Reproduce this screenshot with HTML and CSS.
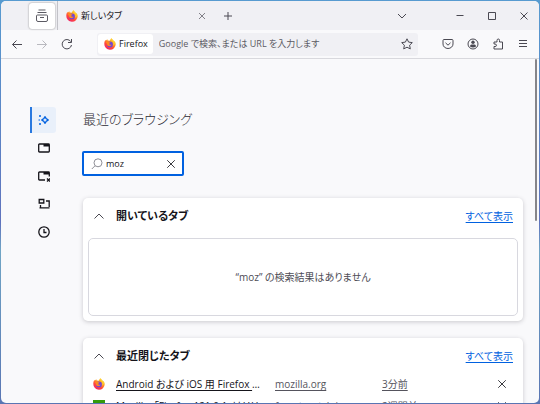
FILE: index.html
```html
<!DOCTYPE html>
<html lang="ja">
<head>
<meta charset="utf-8">
<title>新しいタブ</title>
<link rel="stylesheet" href="styles.css">
</head>
<body>
<svg class="defs" aria-hidden="true">
  <defs>
    <linearGradient id="flame" x1=".85" y1="0" x2=".2" y2="1">
      <stop offset="0" stop-color="#ffe73b"/><stop offset=".35" stop-color="#ffa51f"/><stop offset=".65" stop-color="#ff4a3c"/><stop offset="1" stop-color="#ed1d72"/>
    </linearGradient>
    <symbol id="firefox" viewBox="0 0 16 16">
      <path fill="url(#flame)" d="M15 5.500c-.4-.9-1.100-1.700-1.700-2 .3.600.4 1 .5 1.400C12.700 2.800 11 2.300 10.200.2 8.600 1.100 7.900 2.500 8 3.600 6.600 3.200 5.800 3.300 5.300 3.600 4.600 3 4.600 2.100 4.600 1.700 3.500 2.200 2.800 3 2.400 3.500c-.2-.3-.2-.9-.1-1.300C.9 3.400.4 5.700.4 8a7.600 7.600 0 0 0 15.200.3c0-1-.2-2-.6-2.800z"/>
      <circle cx="8" cy="8.500" r="3.800" fill="#7045d8"/>
      <path fill="#ff8a1e" d="M2.500 5.500c1.500-1.300 3-1.200 4.200.1 1 .1 1.700.1 2 .6-.2.800-1.500.9-1.800 1.500.1 1.400 1.800 1.800 3.200 1-.5 1.600-2 2.500-3.700 2C4.500 10.300 4 9 4 7.500z"/>
      <path fill="#ffd333" d="M10.200.2c-1 1.700.2 3 1.300 4.200 1.600 1.800 1.600 4.400.2 6 2.800-1.700 3.300-3.700 2.100-5.500C12.700 2.800 11 2.300 10.200.2z"/>
    </symbol>
    <symbol id="cross" viewBox="0 0 12 12"><path d="M1.500 1.500l9 9m0-9l-9 9"/></symbol>
    <symbol id="chevron-up" viewBox="0 0 12 12"><path d="M1.500 8.500L6 4l4.500 4.500"/></symbol>
  </defs>
</svg>
<div class="window">
  <div class="tabstrip">
    <button class="view-button" aria-label="Firefox View"><svg class="icon16" viewBox="0 0 16 16"><path d="M4.500 2h7M3.500 4.500h9M3.500 7h9q1 0 1 1v4q0 1.500-1.500 1.500H4q-1.500 0-1.500-1.500V8q0-1 1-1zM6 9.500h4"/></svg></button>
    <div class="tab">
      <svg class="favicon"><use href="#firefox"/></svg>
      <span class="tab-title">新しいタブ</span>
      <button class="tab-close" aria-label="タブを閉じる"><svg class="icon8"><use href="#cross"/></svg></button>
    </div>
    <button class="tool" aria-label="新しいタブを開く"><svg class="icon12" viewBox="0 0 12 12"><path d="M6 2v8M2 6h8"/></svg></button>
    <div class="window-tools">
      <button class="tool" aria-label="タブの一覧"><svg class="icon12" viewBox="0 0 12 12"><path d="M2 4l4 4 4-4"/></svg></button>
      <div class="captions">
        <button class="tool" aria-label="最小化"><svg class="icon12" viewBox="0 0 12 12"><path d="M2.500 5.500h7"/></svg></button>
        <button class="tool" aria-label="最大化"><svg class="icon12" viewBox="0 0 12 12"><path d="M2.500 2.500h7v7h-7z"/></svg></button>
        <button class="tool" aria-label="閉じる"><svg class="icon12" viewBox="0 0 12 12"><path d="M2.500 2.500l7 7m0-7l-7 7"/></svg></button>
      </div>
    </div>
  </div>
  <div class="navbar">
    <div class="history-tools">
      <button class="tool" aria-label="戻る"><svg class="icon12" viewBox="0 0 12 12"><path d="M11 6.500H1.500M5.500 2.500l-4 4 4 4"/></svg></button>
      <button class="tool faded" aria-label="進む"><svg class="icon12" viewBox="0 0 12 12"><path d="M1 6.500h9.500M6.500 2.500l4 4-4 4"/></svg></button>
      <button class="tool" aria-label="再読み込み"><svg class="icon12" viewBox="0 0 12 12"><path d="M10.500 7A4.700 4.700 0 1 1 9.700 3.500M10.500 1v3.500H7"/></svg></button>
    </div>
    <div class="urlbar">
      <span class="identity"><svg class="favicon"><use href="#firefox"/></svg>Firefox</span>
      <input class="url-input" type="text" aria-label="アドレス" placeholder="Google で検索、または URL を入力します">
      <button class="tool" aria-label="ブックマーク"><svg class="icon12" viewBox="0 0 12 12"><path d="M6 .8l1.600 3.300 3.700.5-2.700 2.600.7 3.700L6 9.200l-3.300 1.700.7-3.700L.7 4.600l3.700-.5z"/></svg></button>
    </div>
    <div class="extras">
      <button class="tool" aria-label="Pocket"><svg class="icon12" viewBox="0 0 12 12"><path d="M2 1.500h8q1 0 1 1V6a5 4.500 0 0 1-10 0V2.500q0-1 1-1zM3.500 4.800L6 7.200l2.500-2.400"/></svg></button>
      <button class="tool" aria-label="アカウント"><svg class="icon12" viewBox="0 0 12 12"><circle cx="6" cy="6" r="5"/><circle class="solid" cx="6" cy="4.300" r="1.700"/><path class="solid" d="M3 8.500q0-2 1.500-2h3Q9 6.500 9 8.500 6 10.500 3 8.500z"/></svg></button>
      <button class="tool" aria-label="拡張機能"><svg class="icon12" viewBox="0 0 12 12"><path d="M2 11V8.500h1q1.500 0 1.500-1.200T3 6H2V4h3V2.500Q5 1 6.300 1t1.200 1.500V4H10.500v7z"/></svg></button>
      <button class="tool" aria-label="メニュー"><svg class="icon12" viewBox="0 0 12 12"><path d="M2 2.500h8M2 5.500h8M2 8.500h8"/></svg></button>
    </div>
  </div>
  <div class="page">
    <nav class="sidebar" aria-label="Firefox View">
      <button class="side-item selected" aria-label="最近のブラウジング"><svg class="icon12" viewBox="0 0 12 12"><path class="bold" d="M7 2.500q.7 2.800 3.500 3.500Q7.700 6.700 7 9.500 6.300 6.700 3.500 6 6.300 5.300 7 2.500z"/><path d="M2 1v2M1 2h2M.5 6h1.500M2 9v2M1 10h2"/></svg></button>
      <button class="side-item" aria-label="開いているタブ"><svg class="icon12" viewBox="0 0 12 12"><path class="bold" d="M1.500 2h9q.8 0 .8.800v6.400q0 .8-.8.800h-9q-.8 0-.8-.8V2.800Q.7 2 1.500 2z"/><path class="solid" d="M5.500 2H11v2.500H5.500z"/></svg></button>
      <button class="side-item" aria-label="最近閉じたタブ"><svg class="icon12" viewBox="0 0 12 12"><path class="bold" d="M7 10H1.500q-.8 0-.8-.8V2.800q0-.8.800-.8h9q.8 0 .8.800V6.500M9 8.500l3 3m0-3l-3 3"/><path class="solid" d="M5.500 2H11v2.500H5.500z"/></svg></button>
      <button class="side-item" aria-label="他の端末のタブ"><svg class="icon12" viewBox="0 0 12 12"><path class="bold" d="M1.200 1.500h4.600v3.500H1.200zM8 3h3.200v6M2.500 7v2.500M1.500 9.800h10"/></svg></button>
      <button class="side-item" aria-label="履歴"><svg class="icon12" viewBox="0 0 12 12"><circle class="bold" cx="6" cy="6" r="5.200"/><path class="bold" d="M6 3v3.500h2.500"/></svg></button>
    </nav>
    <main class="content">
      <h1 class="heading">最近のブラウジング</h1>
      <div class="search">
        <svg class="icon12 lens" viewBox="0 0 12 12"><circle cx="7" cy="4.800" r="4"/><path d="M4 7.800L.8 11"/></svg>
        <input class="search-input" type="text" aria-label="検索" value="moz">
        <button class="tool" aria-label="検索をクリア"><svg class="icon10"><use href="#cross"/></svg></button>
      </div>
      <section class="card">
        <div class="card-head">
          <button class="tool" aria-label="折りたたむ"><svg class="icon12"><use href="#chevron-up"/></svg></button>
          <h2 class="card-title">開いているタブ</h2>
          <a class="show-all" href="#">すべて表示</a>
        </div>
        <div class="empty">“moz” の検索結果はありません</div>
      </section>
      <section class="card">
        <div class="card-head">
          <button class="tool" aria-label="折りたたむ"><svg class="icon12"><use href="#chevron-up"/></svg></button>
          <h2 class="card-title">最近閉じたタブ</h2>
          <a class="show-all" href="#">すべて表示</a>
        </div>
        <ul class="closed-tabs">
          <li class="closed-tab">
            <svg class="favicon"><use href="#firefox"/></svg>
            <a class="closed-title" href="#"><span>Android および iOS 用 Firefox </span>…</a>
            <a class="muted" href="#">mozilla.org</a>
            <a class="muted" href="#">3分前</a>
            <button class="tool" aria-label="削除"><svg class="icon10"><use href="#cross"/></svg></button>
          </li>
          <li class="closed-tab">
            <span class="green-icon"></span>
            <a class="closed-title" href="#"><span>Mozilla、「Firefox 121.0.1」はリリ</span></a>
            <a class="muted" href="#">forest.watch.im</a>
            <a class="muted" href="#">2週間前</a>
            <button class="tool" aria-label="削除"><svg class="icon10"><use href="#cross"/></svg></button>
          </li>
        </ul>
      </section>
    </main>
    <div class="scroll-track"><div class="scroll-thumb"></div></div>
  </div>
</div>
</body>
</html>
```
FILE: styles.css
```css
* { box-sizing: border-box; }

body {
  margin: 0;
  height: 100vh;
  padding: 1px;
  overflow: hidden;
  background: linear-gradient(#579bd0, #5f73bd 55%, #70a5c5 62%, #5975b3);
  color: #15141a;
  font-family: "Open Sans", "Noto Sans CJK JP", sans-serif;
  font-size: 10px;
  line-height: 16px;
  font-feature-settings: "palt";
}

button, input { font: inherit; font-feature-settings: inherit; color: inherit; border: 0; padding: 0; margin: 0; background: none; }
a { color: inherit; }
svg { display: block; flex: none; fill: none; stroke: currentColor; }
.defs { position: absolute; width: 0; height: 0; }
.solid { fill: currentColor; stroke: none; }
.bold { stroke-width: 1.3; }
.icon8 { width: 8px; height: 8px; }
.icon10 { width: 10px; height: 10px; }
.icon12 { width: 12px; height: 12px; }
.icon16 { width: 16px; height: 16px; }
.favicon { width: 12px; height: 12px; stroke: none; }

.window {
  display: flex;
  flex-direction: column;
  height: 100%;
  border-radius: 5px;
  overflow: hidden;
  background: #f9f9fb;
}

.tool { display: grid; place-items: center; width: 20px; height: 20px; flex: none; color: #4a4952; }
.faded { color: #b9b9bf; }

.tabstrip { display: flex; align-items: center; height: 29px; flex: none; background: #f0f0f4; font-size: 9px; }
.view-button {
  display: grid;
  place-items: center;
  width: 26px;
  height: 26px;
  margin: 0 2px 0 28px;
  border-radius: 3px;
  background: #fff;
  color: #5b5a63;
  box-shadow: 0 0 2px #888;
}
.tab { display: flex; align-items: center; gap: 3px; width: 153px; height: 100%; padding-left: 8px; border-left: 1px solid #c2c2c8; }
.tab-title { flex: 1; }
.tab-close { display: grid; place-items: center; width: 16px; height: 16px; color: #4a4952; }
.tabstrip > .tool { margin-left: 8px; }
.window-tools { display: flex; gap: 38px; margin-left: auto; padding-right: 5px; }
.captions { display: flex; gap: 12px; }

.navbar { display: flex; align-items: center; height: 29px; flex: none; border-bottom: 1px solid #d8d8dd; font-size: 9px; }
.history-tools { display: flex; gap: 5px; padding-left: 6px; }
.urlbar { display: flex; align-items: center; flex: 1; height: 23px; margin-left: 20px; padding: 0 1px; border-radius: 3px; background: #f0f0f4; }
.identity { display: flex; align-items: center; gap: 3px; height: 20px; padding: 0 5px 0 6px; border-radius: 3px; background: #fff; }
.url-input { flex: 1; min-width: 0; padding-left: 6px; }
.url-input::placeholder { color: #5b5a63; opacity: 1; }
.extras { display: flex; gap: 5px; padding: 0 6px 0 20px; }

.page { display: flex; flex: 1; min-height: 0; }
.sidebar { display: flex; flex-direction: column; gap: 2px; padding: 48px 26px 0 29px; }
.side-item { display: grid; place-items: center; width: 26px; height: 26px; border-left: 2px solid transparent; border-radius: 0 3px 3px 0; }
.selected { border-left-color: #2878df; background: #e9f0fa; color: #0061e0; }

.content { flex: 1; min-width: 0; padding-top: 48px; }
.heading { margin: 0 0 20px 1px; font-size: 13px; line-height: 24px; font-weight: 300; color: #2b2a33; }
.search { display: flex; align-items: center; width: 102px; height: 25px; margin-bottom: 22px; padding: 0 1px 0 7px; border: 2px solid #0061e0; border-radius: 2px; background: #fff; font-size: 9px; }
.search .tool, .closed-tab .tool { color: #15141a; }
.lens { color: #8f8f96; }
.search-input { flex: 1; min-width: 0; padding-left: 3px; outline: 0; }

.card { margin: 0 0 17px 1px; padding: 5px; border-radius: 5px; background: #fff; box-shadow: 0 1px 4px #3a394440; }
.card-head { display: flex; align-items: center; gap: 7px; height: 26px; padding: 0 5px 0 1px; }
.card-title { flex: 1; margin: 0; font-size: 11px; line-height: 16px; font-weight: 700; }
.show-all { color: #0061e0; text-underline-offset: 2px; }
.empty { display: grid; place-items: center; height: 78px; margin-top: 9px; border: 1px solid #d8d8df; border-radius: 5px; color: #4d4c55; }

.closed-tabs { margin: 4px 0 0; padding: 0; list-style: none; }
.closed-tab {
  display: grid;
  grid-template-columns: 12px 148px 96px 1fr 20px;
  column-gap: 11px;
  align-items: center;
  height: 22px;
  padding: 0 6px 0 5px;
  white-space: nowrap;
}
.closed-title { overflow: hidden; text-decoration: none; }
.closed-title span { text-decoration: underline; text-underline-offset: 2px; }
.muted { color: #55545d; text-underline-offset: 2px; }
.green-icon { width: 12px; height: 12px; background: #359b0b; }

.scroll-track { width: 3px; margin: 0 1px 0 12px; }
.scroll-thumb { width: 2px; height: 47%; border-radius: 1px; background: #85858a; }
```
